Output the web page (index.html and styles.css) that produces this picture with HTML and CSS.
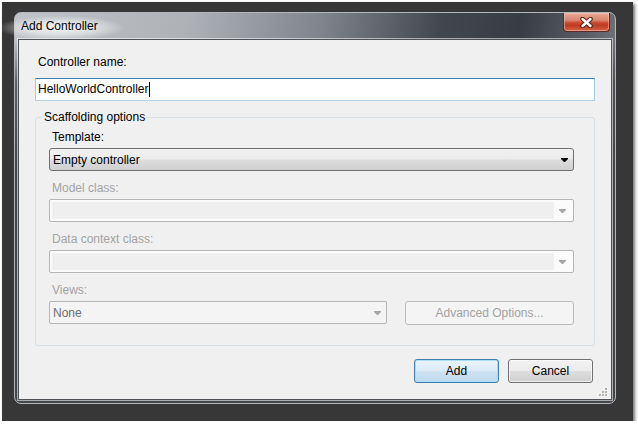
FILE: index.html
```html
<!DOCTYPE html>
<html lang="en">

<head>
    <meta charset="UTF-8">
    <title>Add Controller</title>
    <link rel="stylesheet" href="styles.css">
</head>

<body>

    <div class="desktop">
        <div class="window">
            <div class="titlebar">
                <span class="title">Add Controller</span>
                <button class="close-btn">
                    <svg width="13" height="11" viewBox="0 0 13 11">
                        <path d="M2.5 2 L10.5 9 M10.5 2 L2.5 9" stroke="#5a2418" stroke-width="4.6" stroke-linecap="round" fill="none"/>
                        <path d="M2.5 2 L10.5 9 M10.5 2 L2.5 9" stroke="#ffffff" stroke-width="2.4" stroke-linecap="round" fill="none"/>
                    </svg>
                </button>
            </div>

            <div class="client">
                <div class="label label-top">Controller name:</div>
                <div class="textbox">HelloWorldController<span class="caret"></span></div>

                <fieldset class="group">
                    <legend>Scaffolding options</legend>
                    <div class="group-body">
                        <div class="label">Template:</div>
                        <div class="combo">
                            Empty controller
                            <svg class="arrow" width="7" height="4" viewBox="0 0 7 4"><polygon points="0,0 7,0 7,1 4,4 3,4 0,1" fill="#000"/></svg>
                        </div>

                        <div class="label disabled">Model class:</div>
                        <div class="combo-edit">
                            <span class="combo-field"></span>
                            <svg class="arrow" width="7" height="4" viewBox="0 0 7 4"><polygon points="0,0 7,0 7,1 4,4 3,4 0,1" fill="#a6a6a6"/></svg>
                        </div>

                        <div class="label disabled">Data context class:</div>
                        <div class="combo-edit">
                            <span class="combo-field"></span>
                            <svg class="arrow" width="7" height="4" viewBox="0 0 7 4"><polygon points="0,0 7,0 7,1 4,4 3,4 0,1" fill="#a6a6a6"/></svg>
                        </div>

                        <div class="label disabled">Views:</div>
                        <div class="views-row">
                            <div class="combo-views">
                                None
                                <svg class="arrow" width="7" height="4" viewBox="0 0 7 4"><polygon points="0,0 7,0 7,1 4,4 3,4 0,1" fill="#a6a6a6"/></svg>
                            </div>
                            <button class="btn btn-advanced" disabled>Advanced Options...</button>
                        </div>
                    </div>
                </fieldset>

                <div class="actions">
                    <button class="btn btn-default">Add</button>
                    <button class="btn">Cancel</button>
                </div>

                <svg class="grip" width="8" height="8" viewBox="0 0 8 8">
                    <rect x="6" y="0" width="2" height="2" fill="#b4b4b4"/>
                    <rect x="3" y="3" width="2" height="2" fill="#b4b4b4"/>
                    <rect x="6" y="3" width="2" height="2" fill="#b4b4b4"/>
                    <rect x="0" y="6" width="2" height="2" fill="#b4b4b4"/>
                    <rect x="3" y="6" width="2" height="2" fill="#b4b4b4"/>
                    <rect x="6" y="6" width="2" height="2" fill="#b4b4b4"/>
                </svg>
            </div>
        </div>
    </div>

</body>

</html>
```

FILE: styles.css
```css
body {
    margin: 0;
    background-color: #ffffff;
    font-family: "Segoe UI", "Liberation Sans", Arial, sans-serif;
    font-size: 12px;
    color: #000;
}

.desktop {
    box-sizing: border-box;
    width: 631px;
    height: 419px;
    margin: 2px 0 0 2px;
    padding: 10px 0 0 12px;
    background-color: #373737;
    box-shadow: 2px 2px 3px rgba(0, 0, 0, 0.55);
}

.window {
    box-sizing: border-box;
    width: 602px;
    height: 392px;
    border: 1px solid #b4b8bc;
    border-radius: 7px;
    padding: 0 3px 4px;
    background:
        linear-gradient(to bottom, rgba(67, 71, 76, 0) 0, rgba(67, 71, 76, 0) 27px, rgba(67, 71, 76, 0.8) 70px, #43474c 150px),
        linear-gradient(100deg, #c0c4c8 0%, #aeb2b7 26%, #80858b 46%, #42474e 64%, #383d43 76%, #5e6268 87%, #9a9ea2 100%);
}

.titlebar {
    display: flex;
    align-items: flex-start;
    height: 26px;
}

.title {
    margin-left: -20px;
    padding: 6px 40px 6px 23px;
    line-height: 15px;
    background: radial-gradient(ellipse closest-side at 45% 55%, rgba(255, 255, 255, 0.85), rgba(255, 255, 255, 0.45) 60%, rgba(255, 255, 255, 0));
}

.close-btn {
    display: flex;
    align-items: center;
    justify-content: center;
    box-sizing: border-box;
    width: 47px;
    height: 19px;
    margin: 0 2px 0 auto;
    padding: 0;
    border: 1px solid #5b2a22;
    border-top: none;
    border-radius: 0 0 4px 4px;
    background: linear-gradient(#e9a996 0%, #d98470 40%, #c9472d 55%, #c13b20 70%, #d5654a 100%);
    box-shadow: inset 0 0 0 1px rgba(255, 210, 200, 0.45);
}

.client {
    position: relative;
    box-sizing: border-box;
    height: 361px;
    padding: 15px 18px 0 16px;
    border: 1px solid #4e5257;
    background-color: #f0f0f0;
    box-shadow: 0 0 0 1px rgba(255, 255, 255, 0.55);
}

.label {
    line-height: 15px;
    margin-bottom: 3px;
    padding-left: 3px;
}

.label-top {
    margin-bottom: 8px;
}

.label.disabled {
    color: #a3a3a3;
}

.textbox {
    box-sizing: border-box;
    width: 560px;
    height: 23px;
    padding-left: 2px;
    border: 1px solid;
    border-color: #3d7bad #a4c9e3 #b5cfe7 #a4c9e3;
    background-color: #fff;
    line-height: 21px;
}

.caret {
    display: inline-block;
    width: 1px;
    height: 15px;
    margin-left: 1px;
    background-color: #000;
    vertical-align: middle;
}

.group {
    box-sizing: border-box;
    width: 560px;
    min-width: 0;
    margin: 9px 0 0;
    padding: 5px 0 20px 6px;
    border: 1px solid #d5dfe5;
    border-radius: 3px;
}

.group legend {
    padding: 0 2px;
    line-height: 15px;
}

.group-body {
    padding-left: 7px;
}

.combo {
    display: flex;
    align-items: center;
    box-sizing: border-box;
    width: 525px;
    height: 23px;
    margin-bottom: 10px;
    padding-left: 3px;
    border: 1px solid #707070;
    border-radius: 3px;
    background: linear-gradient(#f2f2f2 0%, #ebebeb 48%, #dddddd 52%, #cfcfcf 100%);
}

.arrow {
    margin: 0 5px 0 auto;
}

.combo-edit {
    display: flex;
    align-items: center;
    box-sizing: border-box;
    width: 525px;
    height: 23px;
    margin-bottom: 10px;
    padding: 2px;
    border: 1px solid #b5b5b5;
    border-radius: 2px;
    background-color: #fbfbfb;
}

.combo-field {
    align-self: stretch;
    width: 502px;
    background-color: #efefef;
}

.views-row {
    display: flex;
    align-items: flex-start;
    gap: 18px;
}

.combo-views {
    display: flex;
    align-items: center;
    box-sizing: border-box;
    width: 338px;
    height: 23px;
    padding-left: 3px;
    border: 1px solid #b5b5b5;
    border-radius: 2px;
    background-color: #f4f4f4;
    color: #6d6d6d;
}

.btn {
    box-sizing: border-box;
    width: 85px;
    height: 24px;
    padding: 0;
    border: 1px solid #707070;
    border-radius: 3px;
    background: linear-gradient(#f2f2f2 0%, #ebebeb 48%, #dddddd 52%, #cfcfcf 100%);
    box-shadow: inset 0 0 0 1px rgba(255, 255, 255, 0.7);
    font: inherit;
    color: #000;
}

.btn-default {
    border-color: #3c7fb1;
    background: linear-gradient(#eaf4fb 0%, #dcebf7 48%, #cde2f2 52%, #c1d9ee 100%);
    box-shadow: inset 0 0 0 1px #a9def6;
}

.btn-advanced {
    width: 169px;
}

.btn:disabled {
    border-color: #b9bcbf;
    background: #f4f4f4;
    box-shadow: none;
    color: #a3a3a3;
}

.actions {
    display: flex;
    justify-content: flex-end;
    gap: 9px;
    margin-top: 13px;
}

.grip {
    position: absolute;
    right: 4px;
    bottom: 3px;
}
```
